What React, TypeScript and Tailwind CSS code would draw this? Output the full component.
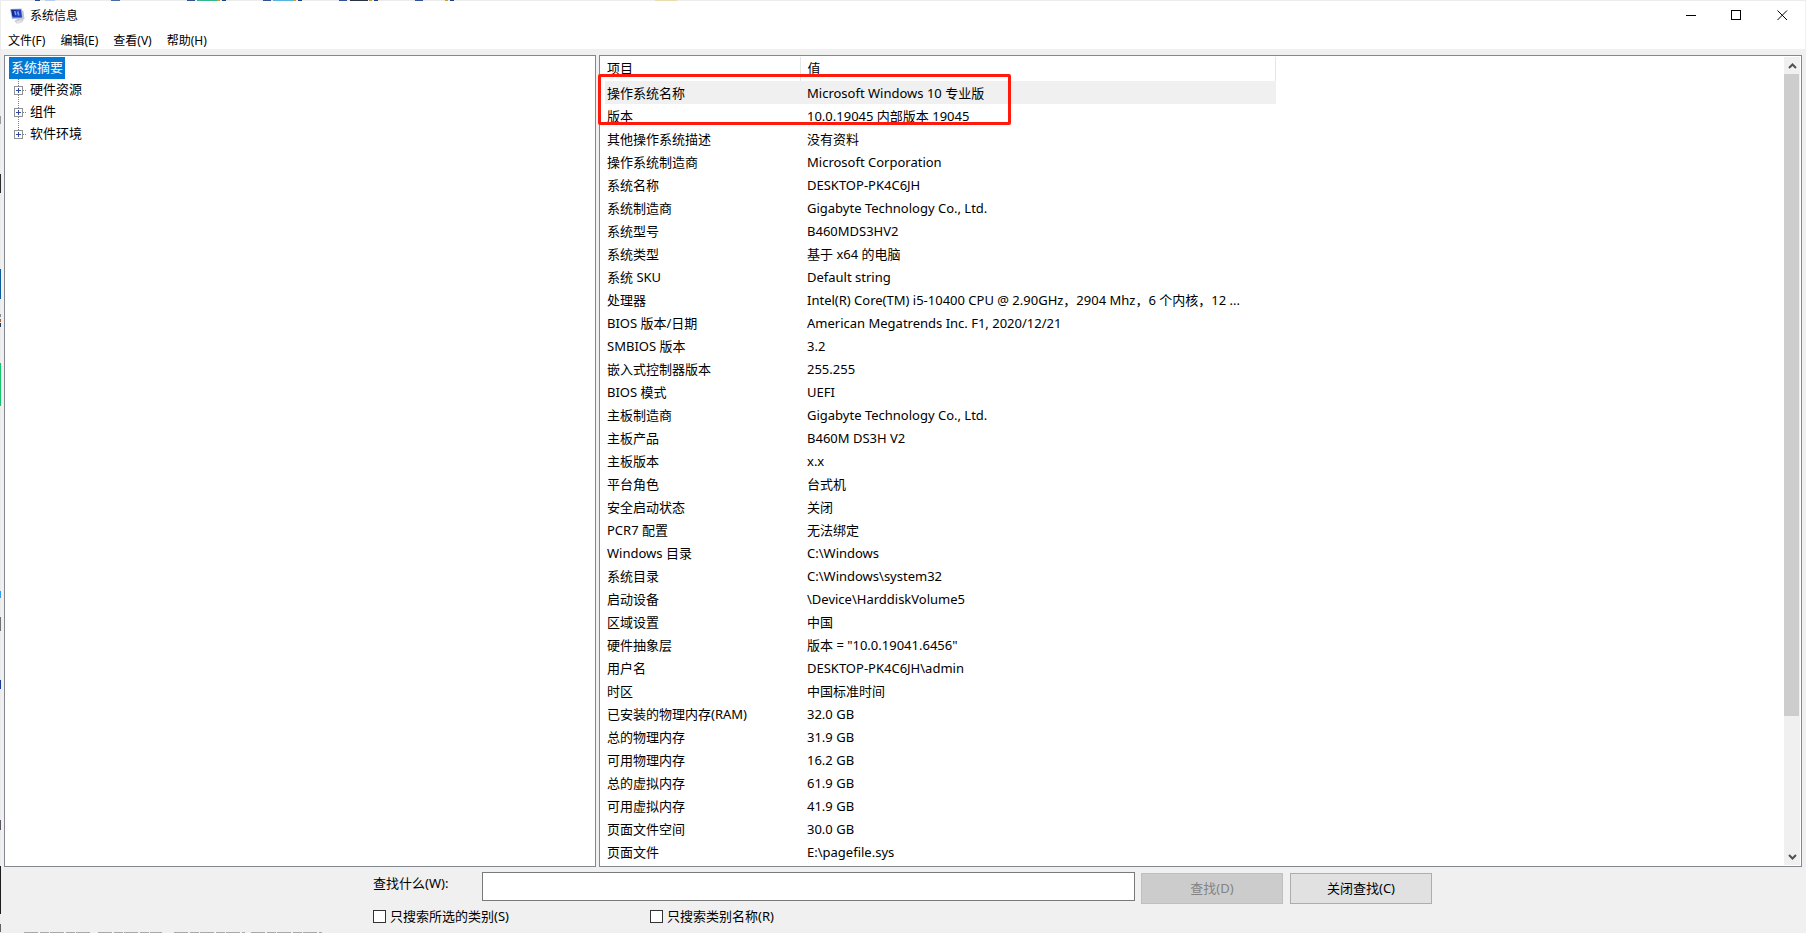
import { ReactNode } from "react";

const rows: [string, string][] = [
  ["操作系统名称", "Microsoft Windows 10 专业版"],
  ["版本", "10.0.19045 内部版本 19045"],
  ["其他操作系统描述", "没有资料"],
  ["操作系统制造商", "Microsoft Corporation"],
  ["系统名称", "DESKTOP-PK4C6JH"],
  ["系统制造商", "Gigabyte Technology Co., Ltd."],
  ["系统型号", "B460MDS3HV2"],
  ["系统类型", "基于 x64 的电脑"],
  ["系统 SKU", "Default string"],
  ["处理器", "Intel(R) Core(TM) i5-10400 CPU @ 2.90GHz，2904 Mhz，6 个内核，12 ..."],
  ["BIOS 版本/日期", "American Megatrends Inc. F1, 2020/12/21"],
  ["SMBIOS 版本", "3.2"],
  ["嵌入式控制器版本", "255.255"],
  ["BIOS 模式", "UEFI"],
  ["主板制造商", "Gigabyte Technology Co., Ltd."],
  ["主板产品", "B460M DS3H V2"],
  ["主板版本", "x.x"],
  ["平台角色", "台式机"],
  ["安全启动状态", "关闭"],
  ["PCR7 配置", "无法绑定"],
  ["Windows 目录", "C:\\Windows"],
  ["系统目录", "C:\\Windows\\system32"],
  ["启动设备", "\\Device\\HarddiskVolume5"],
  ["区域设置", "中国"],
  ["硬件抽象层", "版本 = \"10.0.19041.6456\""],
  ["用户名", "DESKTOP-PK4C6JH\\admin"],
  ["时区", "中国标准时间"],
  ["已安装的物理内存(RAM)", "32.0 GB"],
  ["总的物理内存", "31.9 GB"],
  ["可用物理内存", "16.2 GB"],
  ["总的虚拟内存", "61.9 GB"],
  ["可用虚拟内存", "41.9 GB"],
  ["页面文件空间", "30.0 GB"],
  ["页面文件", "E:\\pagefile.sys"],
];

const menus = ["文件(F)", "编辑(E)", "查看(V)", "帮助(H)"];
const branches = ["硬件资源", "组件", "软件环境"];

// Slivers of the desktop that show past the window's top and left edges: [start, length, colour]
const topSlivers: [number, number, string][] = [
  [35, 5, "#2a4a8a"], [45, 10, "#b4cdee"], [111, 9, "#4a6ba5"], [187, 8, "#2f5394"],
  [197, 20, "#35b58b"], [217, 3, "#d89a2b"], [222, 4, "#1d3f80"], [263, 8, "#2f5394"],
  [273, 20, "#55b4e0"], [293, 3, "#d89a2b"], [298, 4, "#1d3f80"], [339, 8, "#2f5394"],
  [350, 18, "#2b3446"], [369, 3, "#d89a2b"], [374, 4, "#1d3f80"], [415, 8, "#2f5394"],
  [445, 3, "#d89a2b"], [450, 4, "#1d3f80"], [655, 22, "#e8dcae"],
];
const leftSlivers: [number, number, string][] = [
  [116, 8, "#9a9a9a"], [174, 19, "#2b2b2b"], [269, 30, "#0a5a9c"], [314, 3, "#8a8a8a"],
  [319, 3, "#b0602a"], [323, 4, "#2b3a55"], [363, 43, "#12c46c"], [591, 7, "#2ba0ee"],
  [617, 14, "#707078"], [680, 9, "#1b3a92"], [820, 10, "#5a5560"], [866, 48, "#1c1c1e"],
  [924, 8, "#606060"],
];

function Desktop() {
  return (
    <svg className="pointer-events-none absolute inset-0 h-full w-full" shapeRendering="crispEdges" aria-hidden="true">
      {topSlivers.map(([x, w, c]) => <rect key={x} x={x} y="0" width={w} height="1" fill={c} />)}
      {leftSlivers.map(([y, h, c]) => <rect key={y} x="0" y={y} width="1" height={h} fill={c} />)}
      <path d="M24 932.500H90M98 932.500H162M174 932.500H245M251 932.500H322" stroke="#a8a8a8" strokeDasharray="14 2 9 1" />
    </svg>
  );
}

function AppIcon() {
  return (
    <svg width="16" height="16" viewBox="0 0 16 16" aria-hidden="true">
      <path d="M11 1.500 13.500 3 14.500 11 12.500 12z" fill="#c3c7d2" />
      <path d="M4.500 13 8 10.500 12 10.500 13.500 12.500 11 15 6.500 15.500z" fill="#c9cbd0" />
      <path d="M6 13.500 12 12 11 14.500 7 15z" fill="#e4e5e8" />
      <path d="M0 1 11.500 .5 13 10.500 2 11z" fill="#a9b8dc" />
      <path d="M1 1.500 11 1.500 12 9.500 2.500 9.500z" fill="#1f3fc0" />
      <path d="M1.500 2 6 2 4 8 2.500 8z" fill="#15298c" />
      <path d="M4 3 5.500 3 6.500 7 5 7zM7 4 8.500 3 9.500 7.500 8 7.500z" fill="#7f9cf0" />
    </svg>
  );
}

function WindowButton({ label, children }: { label: string; children: ReactNode }) {
  return (
    <button type="button" aria-label={label} className="flex h-7 w-[46px] items-center justify-center">
      <svg width="11" height="11" viewBox="0 0 11 11" fill="none" stroke="#000" aria-hidden="true">
        {children}
      </svg>
    </button>
  );
}

function TreeBranch({ name, last }: { name: string; last: boolean }) {
  return (
    <li className="flex h-[22px] items-center">
      <button type="button" aria-label={`展开${name}`} className="h-[22px] w-5">
        <svg width="20" height="22" viewBox="0 0 20 22" aria-hidden="true" shapeRendering="crispEdges">
          <path d={last ? "M9.500 0V11" : "M9.500 0V22"} stroke="#808080" strokeDasharray="1 1" />
          <path d="M10 11.500H18" stroke="#808080" strokeDasharray="1 1" />
          <rect x="5.500" y="7.500" width="8" height="8" fill="#fff" stroke="#919191" />
          <path d="M7 11.500H12M9.500 9V14" stroke="#2f4aa0" />
        </svg>
      </button>
      <span className="pl-px">{name}</span>
    </li>
  );
}

function Find() {
  return (
    <form className="grid grid-cols-[109px_minmax(0,653px)_148px_155px] pt-[5px] pl-[372px]" onSubmit={(e) => e.preventDefault()}>
      <label htmlFor="find" className="pt-px leading-5">查找什么(W):</label>
      <input id="find" type="text" className="h-[29px] w-full border border-[#7a7a7a] bg-white px-1 outline-none" />
      <button type="button" disabled className="mt-px ml-1.5 h-[31px] border border-[#bfbfbf] bg-[#cccccc] text-[#838383]">查找(D)</button>
      <button type="button" className="mt-px ml-[7px] h-[31px] w-[142px] border border-[#adadad] bg-[#e1e1e1]">关闭查找(C)</button>
      <div className="col-span-4 flex pt-0.5">
        {["只搜索所选的类别(S)", "只搜索类别名称(R)"].map((text) => (
          <label key={text} className="flex w-[277px] items-center gap-1 leading-5">
            <input type="checkbox" className="size-[13px] appearance-none border border-[#333333] bg-white" />
            {text}
          </label>
        ))}
      </div>
    </form>
  );
}

export default function App() {
  return (
    <div className="relative flex min-h-screen flex-col border-t border-l border-[#ececec] bg-[#f0f0f0] font-['Noto_Sans','Noto_Sans_CJK_SC',sans-serif] text-[13px] text-black">
      <header className="mr-px bg-white">
        <div className="flex h-7 items-center justify-between pl-[9px]">
          <div className="flex items-center gap-1 pt-0.5 text-xs">
            <AppIcon />
            <h1>系统信息</h1>
          </div>
          <div className="flex">
            <WindowButton label="最小化"><path d="M1 5.500H11" shapeRendering="crispEdges" /></WindowButton>
            <WindowButton label="最大化"><path d="M.5.500H9.500V9.500H.5z" shapeRendering="crispEdges" /></WindowButton>
            <WindowButton label="关闭"><path d="M.5.500 10 10M10 .5.500 10" /></WindowButton>
          </div>
        </div>
        <nav className="flex h-5 items-center gap-[15px] pt-1 pl-[7px] text-xs">
          {menus.map((m) => (
            <button key={m} type="button">{m}</button>
          ))}
        </nav>
      </header>

      <main className="mt-1.5 mr-1 ml-[3px] grid grid-cols-[592px_minmax(0,1fr)] gap-[3px]">
        <aside className="border border-[#828790] bg-white pt-px pl-1">
          <div className="flex h-[22px] w-14 items-center bg-[#0078d7] pl-0.5 text-white">系统摘要</div>
          <ul>
            {branches.map((b, i) => (
              <TreeBranch key={b} name={b} last={i === branches.length - 1} />
            ))}
          </ul>
        </aside>

        <section className="flex justify-between border border-[#828790] bg-white pt-px pr-px pb-px pl-[5px]">
          <div className="relative pb-0.5">
            <table className="w-[671px] table-fixed border-collapse text-left">
              <colgroup>
                <col className="w-[195px]" />
                <col />
              </colgroup>
              <thead>
                <tr className="h-6">
                  <th className="border-r border-[#e5e5e5] p-0 pl-0.5 font-normal">项目</th>
                  <th className="border-r border-[#e5e5e5] p-0 pl-[7px] font-normal">值</th>
                </tr>
              </thead>
              <tbody>
                {rows.map(([name, value], i) => (
                  <tr key={name} className={i === 0 ? "h-[23px] bg-[#f0f0f0]" : "h-[23px]"}>
                    <td className="p-0 pl-0.5 leading-5 whitespace-nowrap">{name}</td>
                    <td className="p-0 pl-[7px] leading-5 whitespace-nowrap">{value}</td>
                  </tr>
                ))}
              </tbody>
            </table>
            <div className="pointer-events-none absolute top-[17px] -left-[7px] h-[51px] w-[413px] rounded-xs border-3 border-[#ff1a0c]" />
          </div>

          <div className="flex w-4 flex-col bg-[#f0f0f0]">
            <button type="button" aria-label="向上滚动" className="flex h-[17px] items-center justify-center">
              <svg width="9" height="6" viewBox="0 0 9 6" fill="none" stroke="#505050" strokeWidth="2" aria-hidden="true"><path d="M1 5 4.500 1.500 8 5" /></svg>
            </button>
            <div className="mr-px h-[642px] bg-[#cdcdcd]" />
            <button type="button" aria-label="向下滚动" className="mt-auto flex h-[17px] items-center justify-center">
              <svg width="9" height="6" viewBox="0 0 9 6" fill="none" stroke="#505050" strokeWidth="2" aria-hidden="true"><path d="M1 1 4.500 4.500 8 1" /></svg>
            </button>
          </div>
        </section>
      </main>

      <Find />
      <div className="pointer-events-none absolute -top-px right-0 bottom-0 -left-px">
        <Desktop />
      </div>
    </div>
  );
}
